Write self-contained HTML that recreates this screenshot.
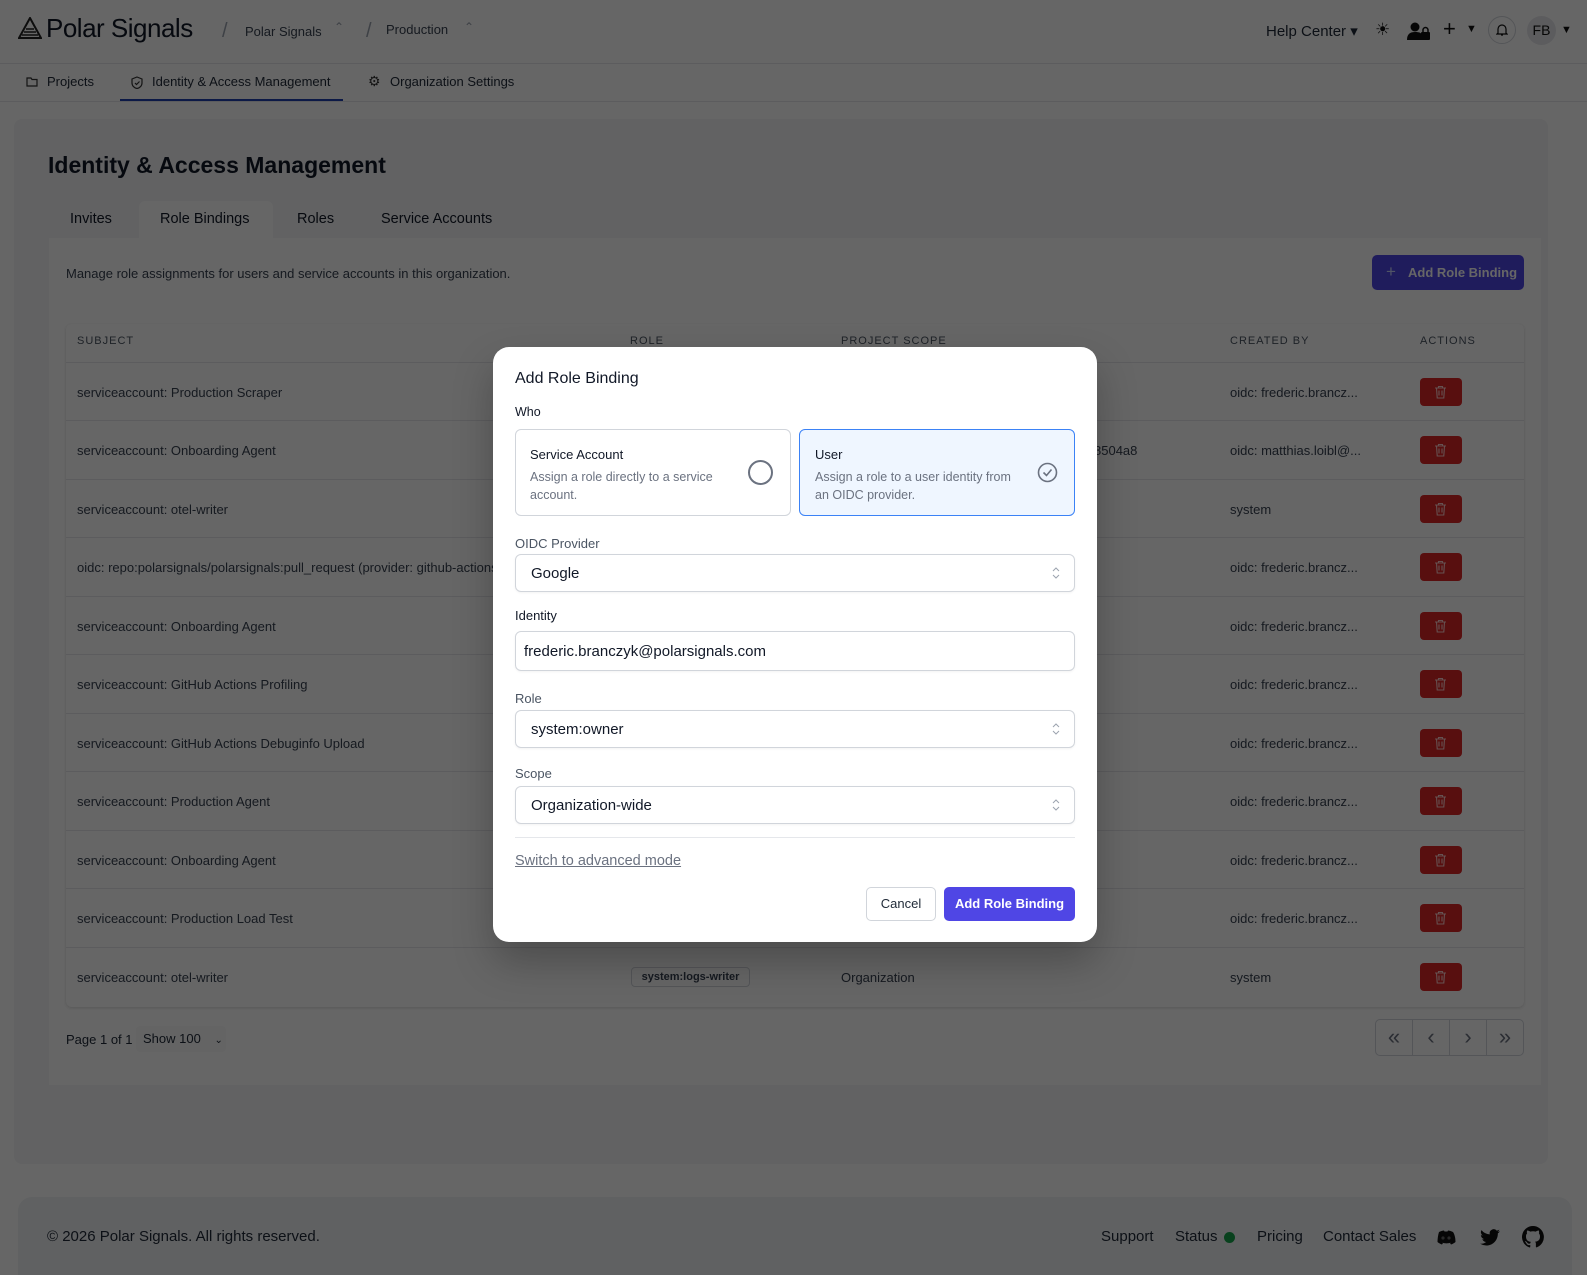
<!DOCTYPE html>
<html><head><meta charset="utf-8"><style>
*{box-sizing:border-box;margin:0;padding:0}
html{width:1587px;height:1275px;overflow:hidden}
body{width:1587px;height:1275px;position:relative;overflow:hidden;background:#fff;font-family:"Liberation Sans",sans-serif;color:#111827}
.a{position:absolute}
.t{position:absolute;white-space:nowrap}
.row{position:absolute;left:66px;width:1458px;height:58px;border-top:1px solid #e5e7eb;font-size:13px;color:#374151}
.row span{position:absolute;top:22px;white-space:nowrap}
.del{position:absolute;left:1354px;top:15px;width:42px;height:28px;background:#dc2626;border-radius:4px}
.del svg{position:absolute;left:14px;top:7px}
.ov{position:absolute;left:0;top:0;width:1587px;height:1275px;background:rgba(0,0,0,.6)}
.lbl{position:absolute;left:22px;font-size:13px;color:#4b5563}
.inp{position:absolute;left:22px;width:560px;height:38px;border:1px solid #d1d5db;border-radius:6px;font-size:15px;color:#111827;padding:10px 14px;box-shadow:0 1px 2px rgba(0,0,0,.05)}
.chev{position:absolute;right:14px;top:12px}
</style></head><body>
<!-- header -->
<div class="a" style="left:0;top:63px;width:1587px;height:1px;background:#e5e7eb"></div>
<svg class="a" style="left:18px;top:17px" width="24" height="22" viewBox="0 0 24 22"><path d="M12 1L1 21h22z" fill="none" stroke="#222" stroke-width="2"/><path d="M6 15h12M4 18h16M8 12h8" stroke="#222" stroke-width="1.5"/></svg>
<div class="t" style="left:46px;top:13px;font-size:26px;color:#111827;letter-spacing:-0.5px">Polar Signals</div>
<div class="t" style="left:222px;top:20px;font-size:20px;color:#9ca3af">/</div>
<div class="t" style="left:245px;top:24px;font-size:13px;color:#374151">Polar Signals</div>
<div class="t" style="left:334px;top:20px;font-size:12px;color:#9ca3af">⌃</div>
<div class="t" style="left:366px;top:20px;font-size:20px;color:#9ca3af">/</div>
<div class="t" style="left:386px;top:22px;font-size:13px;color:#374151">Production</div>
<div class="t" style="left:464px;top:20px;font-size:12px;color:#9ca3af">⌃</div>
<div class="t" style="left:1266px;top:22px;font-size:15px;color:#1f2937">Help Center ▾</div>
<div class="t" style="left:1375px;top:20px;font-size:17px;color:#111">☀</div>
<svg class="a" style="left:1407px;top:22px" width="24" height="18" viewBox="0 0 24 18"><circle cx="8" cy="5" r="4.5" fill="#111"/><path d="M0 18c0-6 3-8 8-8s6 1 7 3v5z" fill="#111"/><rect x="14" y="10" width="9" height="8" rx="1" fill="#111"/><path d="M16 10V8a2.5 2.5 0 015 0v2" stroke="#111" stroke-width="1.5" fill="none"/></svg>
<div class="t" style="left:1443px;top:16px;font-size:22px;color:#111">+</div>
<div class="t" style="left:1466px;top:23px;font-size:11px;color:#111">▼</div>
<div class="a" style="left:1488px;top:16px;width:28px;height:28px;border:1px solid #d1d5db;border-radius:50%"></div>
<svg class="a" style="left:1496px;top:23px" width="12" height="14" viewBox="0 0 12 14"><path d="M2 10V6a4 4 0 018 0v4l1 1H1z M5 12h2" fill="none" stroke="#111" stroke-width="1.2"/></svg>
<div class="a" style="left:1527px;top:16px;width:29px;height:29px;border-radius:50%;background:#e5e7eb;font-size:14px;text-align:center;line-height:29px;color:#111">FB</div>
<div class="t" style="left:1561px;top:24px;font-size:11px;color:#111">▼</div>
<!-- nav -->
<div class="a" style="left:0;top:101px;width:1587px;height:1px;background:#e5e7eb"></div>
<svg class="a" style="left:26px;top:76px" width="12" height="11" viewBox="0 0 12 11"><path d="M1 2h4l1 1.5h5V10H1z" fill="none" stroke="#333" stroke-width="1.2"/></svg>
<div class="t" style="left:47px;top:74px;font-size:13px;color:#1f2937">Projects</div>
<svg class="a" style="left:131px;top:76px" width="12" height="13" viewBox="0 0 12 13"><path d="M6 1l5 2v4c0 3-2.5 5-5 5.5C3.5 12 1 10 1 7V3z M4 7l1.5 1.5L8.5 5.5" fill="none" stroke="#333" stroke-width="1.2"/></svg>
<div class="t" style="left:152px;top:74px;font-size:13px;color:#1f2937">Identity &amp; Access Management</div>
<div class="a" style="left:120px;top:99px;width:223px;height:2px;background:#1e40af"></div>
<div class="t" style="left:368px;top:73px;font-size:14px;color:#333">⚙</div>
<div class="t" style="left:390px;top:74px;font-size:13px;color:#1f2937">Organization Settings</div>
<!-- main card -->
<div class="a" style="left:14px;top:119px;width:1534px;height:1045px;background:#f4f5f7;border-radius:8px"></div>
<div class="t" style="left:48px;top:152px;font-size:23px;font-weight:bold;color:#111827">Identity &amp; Access Management</div>
<div class="a" style="left:139px;top:201px;width:134px;height:38px;background:#fff;border-radius:6px 6px 0 0"></div>
<div class="t" style="left:70px;top:211px;font-size:14.5px">Invites</div>
<div class="t" style="left:160px;top:211px;font-size:14.5px">Role Bindings</div>
<div class="t" style="left:297px;top:211px;font-size:14.5px">Roles</div>
<div class="t" style="left:381px;top:211px;font-size:14.5px">Service Accounts</div>
<div class="a" style="left:49px;top:238px;width:1492px;height:847px;background:#fff"></div>
<div class="t" style="left:66px;top:266px;font-size:13px;color:#374151">Manage role assignments for users and service accounts in this organization.</div>
<div class="a" style="left:1372px;top:255px;width:152px;height:35px;background:#4f46e5;border-radius:5px;color:#fff;font-size:13px;font-weight:bold;line-height:35px;padding-left:36px">Add Role Binding</div>
<div class="t" style="left:1386px;top:262px;font-size:17px;color:#c7d2fe">+</div>
<div class="a" style="left:66px;top:324px;width:1458px;height:683px;border-radius:6px;box-shadow:0 1px 3px rgba(0,0,0,.15)"></div>
<div class="t" style="left:77px;top:335px;font-size:11px;letter-spacing:1px;color:#4b5563">SUBJECT</div>
<div class="t" style="left:630px;top:335px;font-size:11px;letter-spacing:1px;color:#4b5563">ROLE</div>
<div class="t" style="left:841px;top:335px;font-size:11px;letter-spacing:1px;color:#4b5563">PROJECT SCOPE</div>
<div class="t" style="left:1230px;top:335px;font-size:11px;letter-spacing:1px;color:#4b5563">CREATED BY</div>
<div class="t" style="left:1420px;top:335px;font-size:11px;letter-spacing:1px;color:#4b5563">ACTIONS</div>

<div class="row" style="top:362px"><span style="left:11px">serviceaccount: Production Scraper</span><span style="left:1164px">oidc: frederic.brancz...</span><div class="del"><svg width="13" height="14" viewBox="0 0 13 14"><path d="M1 3h11M4.5 3V1.5h4V3M2.5 3l.7 10h6.6l.7-10M5 5.5v5M8 5.5v5" fill="none" stroke="#fecaca" stroke-width="1.1"/></svg></div></div>
<div class="row" style="top:420px"><span style="left:11px">serviceaccount: Onboarding Agent</span><span style="left:1028px">8504a8</span><span style="left:1164px">oidc: matthias.loibl@...</span><div class="del"><svg width="13" height="14" viewBox="0 0 13 14"><path d="M1 3h11M4.5 3V1.5h4V3M2.5 3l.7 10h6.6l.7-10M5 5.5v5M8 5.5v5" fill="none" stroke="#fecaca" stroke-width="1.1"/></svg></div></div>
<div class="row" style="top:479px"><span style="left:11px">serviceaccount: otel-writer</span><span style="left:1164px">system</span><div class="del"><svg width="13" height="14" viewBox="0 0 13 14"><path d="M1 3h11M4.5 3V1.5h4V3M2.5 3l.7 10h6.6l.7-10M5 5.5v5M8 5.5v5" fill="none" stroke="#fecaca" stroke-width="1.1"/></svg></div></div>
<div class="row" style="top:537px"><span style="left:11px">oidc: repo:polarsignals/polarsignals:pull_request (provider: github-actions)</span><span style="left:1164px">oidc: frederic.brancz...</span><div class="del"><svg width="13" height="14" viewBox="0 0 13 14"><path d="M1 3h11M4.5 3V1.5h4V3M2.5 3l.7 10h6.6l.7-10M5 5.5v5M8 5.5v5" fill="none" stroke="#fecaca" stroke-width="1.1"/></svg></div></div>
<div class="row" style="top:596px"><span style="left:11px">serviceaccount: Onboarding Agent</span><span style="left:1164px">oidc: frederic.brancz...</span><div class="del"><svg width="13" height="14" viewBox="0 0 13 14"><path d="M1 3h11M4.5 3V1.5h4V3M2.5 3l.7 10h6.6l.7-10M5 5.5v5M8 5.5v5" fill="none" stroke="#fecaca" stroke-width="1.1"/></svg></div></div>
<div class="row" style="top:654px"><span style="left:11px">serviceaccount: GitHub Actions Profiling</span><span style="left:1164px">oidc: frederic.brancz...</span><div class="del"><svg width="13" height="14" viewBox="0 0 13 14"><path d="M1 3h11M4.5 3V1.5h4V3M2.5 3l.7 10h6.6l.7-10M5 5.5v5M8 5.5v5" fill="none" stroke="#fecaca" stroke-width="1.1"/></svg></div></div>
<div class="row" style="top:713px"><span style="left:11px">serviceaccount: GitHub Actions Debuginfo Upload</span><span style="left:1164px">oidc: frederic.brancz...</span><div class="del"><svg width="13" height="14" viewBox="0 0 13 14"><path d="M1 3h11M4.5 3V1.5h4V3M2.5 3l.7 10h6.6l.7-10M5 5.5v5M8 5.5v5" fill="none" stroke="#fecaca" stroke-width="1.1"/></svg></div></div>
<div class="row" style="top:771px"><span style="left:11px">serviceaccount: Production Agent</span><span style="left:1164px">oidc: frederic.brancz...</span><div class="del"><svg width="13" height="14" viewBox="0 0 13 14"><path d="M1 3h11M4.5 3V1.5h4V3M2.5 3l.7 10h6.6l.7-10M5 5.5v5M8 5.5v5" fill="none" stroke="#fecaca" stroke-width="1.1"/></svg></div></div>
<div class="row" style="top:830px"><span style="left:11px">serviceaccount: Onboarding Agent</span><span style="left:1164px">oidc: frederic.brancz...</span><div class="del"><svg width="13" height="14" viewBox="0 0 13 14"><path d="M1 3h11M4.5 3V1.5h4V3M2.5 3l.7 10h6.6l.7-10M5 5.5v5M8 5.5v5" fill="none" stroke="#fecaca" stroke-width="1.1"/></svg></div></div>
<div class="row" style="top:888px"><span style="left:11px">serviceaccount: Production Load Test</span><span style="left:1164px">oidc: frederic.brancz...</span><div class="del"><svg width="13" height="14" viewBox="0 0 13 14"><path d="M1 3h11M4.5 3V1.5h4V3M2.5 3l.7 10h6.6l.7-10M5 5.5v5M8 5.5v5" fill="none" stroke="#fecaca" stroke-width="1.1"/></svg></div></div>
<div class="row" style="top:947px"><span style="left:11px">serviceaccount: otel-writer</span><div class="a" style="left:565px;top:19px;width:119px;height:20px;border:1px solid #d1d5db;border-radius:4px;font-size:11px;font-weight:bold;text-align:center;line-height:18px;color:#374151">system:logs-writer</div><span style="left:775px">Organization</span><span style="left:1164px">system</span><div class="del"><svg width="13" height="14" viewBox="0 0 13 14"><path d="M1 3h11M4.5 3V1.5h4V3M2.5 3l.7 10h6.6l.7-10M5 5.5v5M8 5.5v5" fill="none" stroke="#fecaca" stroke-width="1.1"/></svg></div></div>

<div class="t" style="left:66px;top:1032px;font-size:13px;color:#1f2937">Page 1 of 1</div>
<div class="a" style="left:136px;top:1026px;width:90px;height:26px;border-radius:4px;background:#fafafa;font-size:13px;line-height:26px;padding-left:7px;color:#1f2937">Show 100 <span style="margin-left:10px;font-size:10px">⌄</span></div>
<div class="a" style="left:1375px;top:1019px;width:149px;height:37px;border:1px solid #d1d5db;border-radius:5px;display:flex">
<div style="flex:1;border-right:1px solid #d1d5db;text-align:center;line-height:34px;font-size:22px;color:#6b7280">«</div>
<div style="flex:1;border-right:1px solid #d1d5db;text-align:center;line-height:34px;font-size:22px;color:#6b7280">‹</div>
<div style="flex:1;border-right:1px solid #d1d5db;text-align:center;line-height:34px;font-size:22px;color:#6b7280">›</div>
<div style="flex:1;text-align:center;line-height:34px;font-size:22px;color:#6b7280">»</div></div>
<!-- footer -->
<div class="a" style="left:18px;top:1197px;width:1554px;height:78px;background:#f1f2f4;border-radius:14px 14px 0 0"></div>
<div class="t" style="left:47px;top:1228px;font-size:15px;color:#1f2937">© 2026 Polar Signals. All rights reserved.</div>
<div class="t" style="left:1101px;top:1228px;font-size:15px;color:#1f2937">Support</div>
<div class="t" style="left:1175px;top:1228px;font-size:15px;color:#1f2937">Status</div>
<div class="a" style="left:1224px;top:1232px;width:11px;height:11px;border-radius:50%;background:#16a34a"></div>
<div class="t" style="left:1257px;top:1228px;font-size:15px;color:#1f2937">Pricing</div>
<div class="t" style="left:1323px;top:1228px;font-size:15px;color:#1f2937">Contact Sales</div>
<svg class="a" style="left:1436px;top:1230px" width="20" height="15" viewBox="0 0 20 15"><path d="M3 2c2-1 4-1.5 5-1.5l.5 1h3l.5-1c1 0 3 .5 5 1.5 2 3 2.5 7 2.5 10-1.5 1.2-3 2-4.5 2.5l-1-1.5 1.5-.8c-3 1.5-7 1.5-10 0l1.5.8-1 1.5C4.5 14 3 13.2 1.5 12c0-3 .5-7 1.5-10z" fill="#111"/><circle cx="7" cy="8" r="1.6" fill="#666"/><circle cx="13" cy="8" r="1.6" fill="#666"/></svg>
<svg class="a" style="left:1479px;top:1229px" width="22" height="18" viewBox="0 0 24 20"><path d="M23 2.5c-.8.4-1.7.6-2.6.7.9-.6 1.6-1.4 2-2.5-.9.5-1.9.9-2.9 1.1A4.5 4.5 0 0011.8 6 12.8 12.8 0 012.5 1.3a4.5 4.5 0 001.4 6c-.7 0-1.4-.2-2-.6 0 2.2 1.6 4 3.6 4.5-.7.2-1.4.2-2 .1.6 1.8 2.3 3.1 4.2 3.1A9 9 0 011 16.3 12.8 12.8 0 007.9 18.3c8.3 0 12.8-6.9 12.8-12.8v-.6c.9-.6 1.6-1.4 2.3-2.4z" fill="#111"/></svg>
<svg class="a" style="left:1522px;top:1226px" width="22" height="22" viewBox="0 0 16 16"><path d="M8 0a8 8 0 00-2.5 15.6c.4 0 .5-.2.5-.4v-1.4c-2.2.5-2.7-1-2.7-1-.4-.9-.9-1.2-.9-1.200-.7-.5.1-.5.1-.5.8.1 1.2.8 1.2.8.7 1.3 1.9.9 2.3.7.1-.5.3-.9.5-1.1-1.8-.2-3.6-.9-3.6-4 0-.9.3-1.6.8-2.1-.1-.2-.4-1 .1-2.1 0 0 .7-.2 2.2.8a7.5 7.5 0 014 0c1.5-1 2.2-.8 2.2-.8.4 1.1.2 1.9.1 2.1.5.6.8 1.3.8 2.1 0 3.1-1.9 3.700-3.6 3.9.3.3.6.8.6 1.5v2.2c0 .2.1.5.6.4A8 8 0 008 0z" fill="#111"/></svg>
<!-- overlay -->
<div class="ov"></div>
<!-- modal -->
<div class="a" style="left:493px;top:347px;width:604px;height:595px;background:#fff;border-radius:16px;box-shadow:0 20px 40px rgba(0,0,0,.25)">
<div class="t" style="left:22px;top:23px;font-size:16px;font-weight:500;color:#111827">Add Role Binding</div>
<div class="t" style="left:22px;top:58px;font-size:12.5px;color:#111827">Who</div>
<div class="a" style="left:22px;top:82px;width:276px;height:87px;border:1px solid #d1d5db;border-radius:6px">
<div class="t" style="left:14px;top:17px;font-size:13px;color:#111827">Service Account</div>
<div class="a" style="left:14px;top:38px;width:200px;font-size:12.5px;line-height:18px;color:#6b7280">Assign a role directly to a service account.</div>
<div class="a" style="left:232px;top:30px;width:25px;height:25px;border:2px solid #6b7280;border-radius:50%"></div></div>
<div class="a" style="left:306px;top:82px;width:276px;height:87px;border:1px solid #3b82f6;border-radius:6px;background:#eff6ff">
<div class="t" style="left:15px;top:17px;font-size:13px;color:#111827">User</div>
<div class="a" style="left:15px;top:38px;width:210px;font-size:12.5px;line-height:18px;color:#6b7280">Assign a role to a user identity from an OIDC provider.</div>
<svg class="a" style="left:237px;top:32px" width="21" height="21" viewBox="0 0 21 21"><circle cx="10.5" cy="10.5" r="9" fill="none" stroke="#6b7280" stroke-width="1.6"/><path d="M6.5 10.5l3 3 5-6" fill="none" stroke="#6b7280" stroke-width="1.6"/></svg></div>
<div class="lbl" style="top:189px">OIDC Provider</div>
<div class="inp" style="top:207px;padding-left:15px">Google<svg class="chev" width="8" height="12" viewBox="0 0 8 12"><path d="M1 4l3-3 3 3M1 8l3 3 3-3" fill="none" stroke="#9ca3af" stroke-width="1"/></svg></div>
<div class="t" style="left:22px;top:261px;font-size:13px;color:#111827">Identity</div>
<div class="inp" style="top:284px;height:40px;padding-left:8px;padding-top:11px">frederic.branczyk@polarsignals.com</div>
<div class="lbl" style="top:344px">Role</div>
<div class="inp" style="top:363px;padding-left:15px">system:owner<svg class="chev" width="8" height="12" viewBox="0 0 8 12"><path d="M1 4l3-3 3 3M1 8l3 3 3-3" fill="none" stroke="#9ca3af" stroke-width="1"/></svg></div>
<div class="lbl" style="top:419px">Scope</div>
<div class="inp" style="top:439px;padding-left:15px">Organization-wide<svg class="chev" width="8" height="12" viewBox="0 0 8 12"><path d="M1 4l3-3 3 3M1 8l3 3 3-3" fill="none" stroke="#9ca3af" stroke-width="1"/></svg></div>
<div class="a" style="left:22px;top:490px;width:560px;height:1px;background:#e5e7eb"></div>
<div class="t" style="left:22px;top:506px;font-size:14.5px;color:#6b7280;text-decoration:underline">Switch to advanced mode</div>
<div class="a" style="left:373px;top:540px;width:70px;height:34px;border:1px solid #d1d5db;border-radius:5px;font-size:13px;text-align:center;line-height:32px;color:#1f2937">Cancel</div>
<div class="a" style="left:451px;top:540px;width:131px;height:34px;background:#4f46e5;border-radius:5px;font-size:13px;font-weight:bold;text-align:center;line-height:34px;color:#fff">Add Role Binding</div>
</div>
</body></html>
